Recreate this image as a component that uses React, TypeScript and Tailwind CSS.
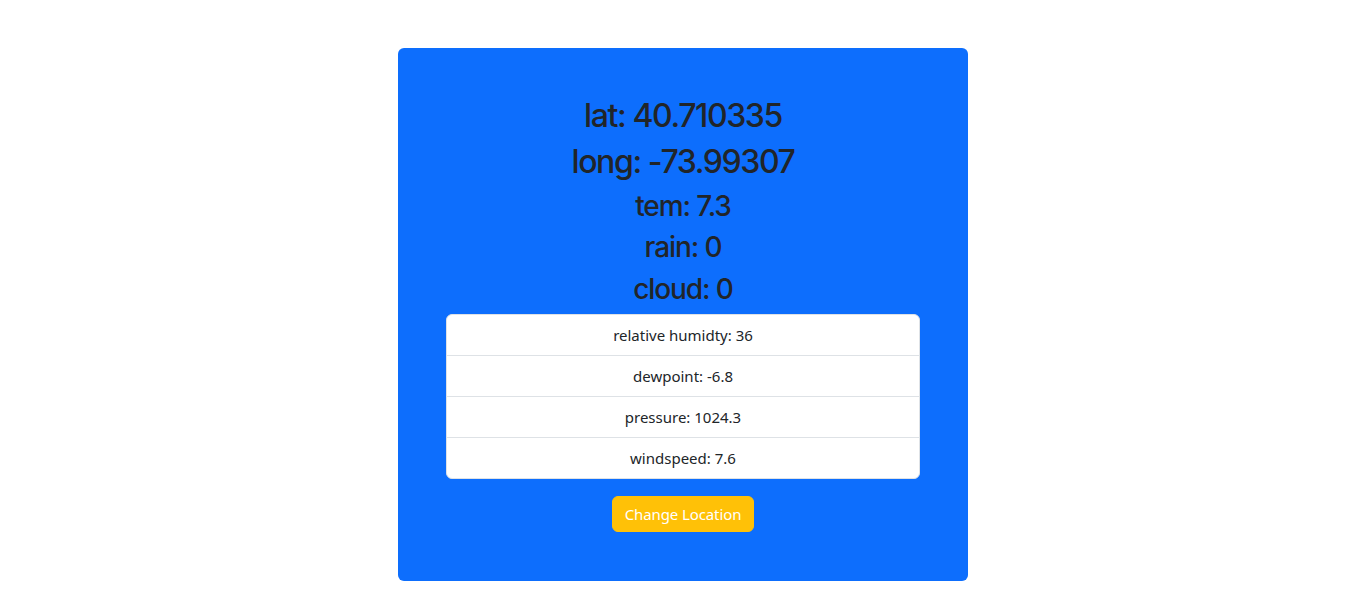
import React from "react";

type Stat = {
  label: string;
  value: string;
};

const details: Stat[] = [
  { label: "relative humidty", value: "36" },
  { label: "dewpoint", value: "-6.8" },
  { label: "pressure", value: "1024.3" },
  { label: "windspeed", value: "7.6" },
];

const App = () => {
  return (
    <div className="min-h-screen bg-white pl-[13px] pt-12 font-['Noto_Sans','Open_Sans',sans-serif] text-[#212529]">
      <div className="mx-auto w-[570px] rounded-md bg-[#0d6efd] px-12 pt-12 pb-[49px] text-center">
        <h2 className="mb-2 pt-px font-['Inter',sans-serif] text-[32px] leading-[38.4px] font-medium tracking-[-1.4px]">lat: 40.710335</h2>
        <h2 className="mb-2 font-['Inter',sans-serif] text-[32px] leading-[38.4px] font-medium tracking-[-1.4px]">long: -73.99307</h2>
        <h3 className="mb-2 font-['Inter',sans-serif] text-[28px] leading-[33.6px] font-medium tracking-[-1.1px]">tem: 7.3</h3>
        <h3 className="mb-2 font-['Inter',sans-serif] text-[28px] leading-[33.6px] font-medium tracking-[-1.1px]">rain: 0</h3>
        <h3 className="mb-[7px] font-['Inter',sans-serif] text-[28px] leading-[33.6px] font-medium tracking-[-1.1px]">cloud: 0</h3>

        <ul className="flex flex-col rounded-md border border-[#dee2e6] bg-white">
          {details.map((item, i) => (
            <li
              key={item.label}
              className={
                "px-4 py-2 text-[15px] leading-6 " +
                (i > 0 ? "border-t border-[#dee2e6]" : "")
              }
            >
              {item.label}: {item.value}
            </li>
          ))}
        </ul>

        <button className="mt-[17px] rounded-md border border-[#ffc107] bg-[#ffc107] px-3 py-[5px] text-[15px] leading-6 tracking-[-0.1px] text-white">
          Change Location
        </button>
      </div>
    </div>
  );
};

export default App;
